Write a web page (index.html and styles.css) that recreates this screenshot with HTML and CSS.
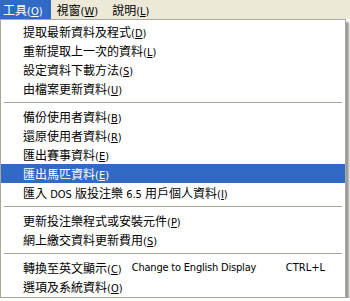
FILE: index.html
```html
<!DOCTYPE html>
<html lang="zh-Hant">
<head>
    <meta charset="UTF-8">
    <title>工具</title>
    <link rel="stylesheet" href="styles.css">
</head>
<body>
    <div class="menubar">
        <span class="bar-item active">工具<span class="key">(<u>O</u>)</span></span>
        <span class="bar-item">視窗<span class="key">(<u>W</u>)</span></span>
        <span class="bar-item">說明<span class="key">(<u>L</u>)</span></span>
    </div>

    <div class="menu">
        <div class="item">提取最新資料及程式<span class="key">(<u>D</u>)</span></div>
        <div class="item">重新提取上一次的資料<span class="key">(<u>L</u>)</span></div>
        <div class="item">設定資料下載方法<span class="key">(<u>S</u>)</span></div>
        <div class="item">由檔案更新資料<span class="key">(<u>U</u>)</span></div>
        <div class="sep"></div>
        <div class="item">備份使用者資料<span class="key">(<u>B</u>)</span></div>
        <div class="item">還原使用者資料<span class="key">(<u>R</u>)</span></div>
        <div class="item">匯出賽事資料<span class="key">(<u>E</u>)</span></div>
        <div class="item selected">匯出馬匹資料<span class="key">(<u>E</u>)</span></div>
        <div class="item">匯入<span class="key"> DOS </span>版投注樂<span class="key"> 6.5 </span>用戶個人資料<span class="key">(<u>I</u>)</span></div>
        <div class="sep"></div>
        <div class="item">更新投注樂程式或安裝元件<span class="key">(<u>P</u>)</span></div>
        <div class="item">網上繳交資料更新費用<span class="key">(<u>S</u>)</span></div>
        <div class="sep"></div>
        <div class="item split">
            <span>轉換至英文顯示<span class="key">(<u>C</u>)</span></span>
            <span class="key eng">Change to English Display</span>
            <span class="key shortcut">CTRL+L</span>
        </div>
        <div class="item">選項及系統資料<span class="key">(<u>O</u>)</span></div>
    </div>
</body>
</html>
```

FILE: styles.css
```css
* {
    margin: 0;
    padding: 0;
    box-sizing: border-box;
}

body {
    font-family: "Noto Sans CJK TC", sans-serif;
    font-size: 12px;
    color: #000;
    background: #fff;
}

.key {
    font-family: "DejaVu Sans Condensed", "DejaVu Sans", sans-serif;
    font-size: 11px;
    white-space: pre;
}

.menubar {
    display: flex;
    height: 19px;
    background: #ece9d8;
}

.bar-item {
    padding: 0 8px 0 6px;
    line-height: 19px;
    white-space: nowrap;
}

.bar-item:first-child {
    margin-left: -3px;
}

.bar-item.active {
    background: #316ac5;
    color: #fff;
}

.menu {
    width: 346px;
    border: 1px solid #aca899;
    padding: 2px 0 1px;
    background: #fff;
    box-shadow: 3px 3px 2px rgba(0, 0, 0, 0.4);
}

.item {
    height: 19px;
    line-height: 19px;
    padding: 0 20px 0 22px;
    white-space: nowrap;
}

.item.selected {
    background: #316ac5;
    color: #fff;
}

.item.split {
    display: flex;
}

.eng {
    margin-left: 10px;
    letter-spacing: -0.2px;
}

.shortcut {
    margin-left: auto;
}

.sep {
    height: 9px;
    margin: 0 3px;
    display: flex;
    align-items: center;
}

.sep::after {
    content: "";
    flex: 1;
    height: 1px;
    background: #aca899;
}
```
